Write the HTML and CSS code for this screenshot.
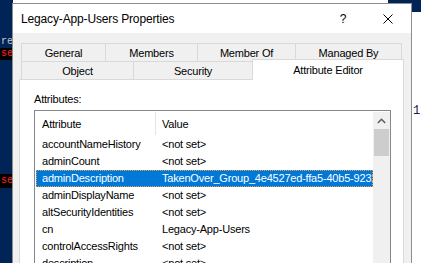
FILE: index.html
```html
<!DOCTYPE html>
<html>
<head>
<meta charset="utf-8">
<link rel="stylesheet" href="styles.css">
</head>
<body>
<div class="console">
  <div class="con-line con-gray">red</div>
  <div class="con-line con-err">se</div>
  <div class="con-line con-err con-low">se</div>
</div>
<div class="topnav"></div>
<div class="gutter">1</div>

<div class="dialog">
  <div class="titlebar">
    <div class="title">Legacy-App-Users Properties</div>
    <div class="tbtn help">?</div>
    <div class="tbtn close">
      <svg width="10" height="10" viewBox="0 0 10 10"><path d="M0.5 0.5 L9.5 9.5 M9.5 0.5 L0.5 9.5" stroke="#000" stroke-width="1" fill="none"/></svg>
    </div>
  </div>
  <div class="content">
    <div class="tabs">
      <div class="tabrow">
        <div class="tab w-general">General</div>
        <div class="tab w-members">Members</div>
        <div class="tab w-memberof">Member Of</div>
        <div class="tab w-managed">Managed By</div>
      </div>
      <div class="tabrow">
        <div class="tab w-object">Object</div>
        <div class="tab w-security">Security</div>
        <div class="tab tab-sel w-attr">Attribute Editor</div>
      </div>
    </div>
    <div class="panel">
      <div class="label">Attributes:</div>
      <div class="list">
        <div class="list-main">
          <div class="header">
            <div class="h1">Attribute</div>
            <div class="hdiv"></div>
            <div class="h2">Value</div>
          </div>
          <div class="row"><div class="c1">accountNameHistory</div><div class="c2">&lt;not set&gt;</div></div>
          <div class="row"><div class="c1">adminCount</div><div class="c2">&lt;not set&gt;</div></div>
          <div class="row row-sel"><div class="c1">adminDescription</div><div class="c2">TakenOver_Group_4e4527ed-ffa5-40b5-9231-7c2a</div></div>
          <div class="row"><div class="c1">adminDisplayName</div><div class="c2">&lt;not set&gt;</div></div>
          <div class="row"><div class="c1">altSecurityIdentities</div><div class="c2">&lt;not set&gt;</div></div>
          <div class="row"><div class="c1">cn</div><div class="c2">Legacy-App-Users</div></div>
          <div class="row"><div class="c1">controlAccessRights</div><div class="c2">&lt;not set&gt;</div></div>
          <div class="row"><div class="c1">description</div><div class="c2">&lt;not set&gt;</div></div>
        </div>
        <div class="scrollbar">
          <div class="sb-btn">
            <svg width="9" height="6" viewBox="0 0 9 6"><path d="M0.8 5 L4.5 1.3 L8.2 5" stroke="#606060" stroke-width="1.6" fill="none"/></svg>
          </div>
          <div class="sb-thumb"></div>
        </div>
      </div>
    </div>
  </div>
</div>
</body>
</html>
```

FILE: styles.css
```css
html, body {
  margin: 0;
  padding: 0;
}
body {
  width: 421px;
  height: 263px;
  overflow: hidden;
  position: relative;
  background: #ffffff;
  font-family: "Liberation Sans", Arial, sans-serif;
  color: #000;
}

/* background windows */
.console {
  position: absolute;
  left: 0;
  top: 0;
  width: 13px;
  height: 263px;
  background: #012456;
  overflow: hidden;
  font-family: "Liberation Mono", monospace;
  font-size: 10px;
  padding-top: 36px;
  box-sizing: border-box;
}
.con-line {
  height: 12px;
  line-height: 12px;
  white-space: nowrap;
  padding-left: 1px;
}
.con-gray {
  color: #c8c8c8;
}
.con-err {
  background: #000;
  color: #ff2020;
  height: 12px;
}
.con-low {
  margin-top: 114px;
  height: 14px;
  line-height: 14px;
}
.topnav {
  position: absolute;
  right: 0;
  top: 0;
  width: 33px;
  height: 12px;
  background: #012456;
}
.gutter {
  position: absolute;
  left: 413px;
  top: 104px;
  font-family: "Liberation Mono", monospace;
  font-size: 12px;
  color: #14203a;
}

/* dialog */
.dialog {
  position: absolute;
  left: 12px;
  top: 3px;
  width: 400px;
  height: 290px;
  box-sizing: border-box;
  border: 1px solid #8e8e8e;
  background: #f0f0f0;
}
.titlebar {
  height: 29px;
  background: #fff;
  display: flex;
  align-items: center;
}
.title {
  flex: 1;
  padding-left: 8px;
  font-size: 12px;
  letter-spacing: -0.15px;
}
.tbtn {
  width: 46px;
  height: 29px;
  display: flex;
  align-items: center;
  justify-content: center;
}
.help {
  font-size: 12px;
  padding-left: 2px;
  box-sizing: border-box;
}

.content {
  padding: 10px 7px 0 6px;
}
.tabs {
  margin: 0 2px;
}
.tabrow {
  display: flex;
  height: 18px;
  align-items: flex-end;
}
.tab {
  box-sizing: border-box;
  height: 18px;
  flex-shrink: 0;
  border: 1px solid #d9d9d9;
  border-bottom: none;
  background: #f0f0f0;
  font-size: 11px;
  letter-spacing: -0.2px;
  display: flex;
  align-items: center;
  justify-content: center;
  margin-left: -1px;
}
.tab:first-child {
  margin-left: 0;
}
.w-general { width: 85px; }
.w-members { width: 93px; }
.w-memberof { width: 99px; }
.w-managed { width: 107px; }
.w-object { width: 113px; }
.w-security { width: 120px; }
.w-attr { width: 152px; }
.tab-sel {
  height: 21px;
  margin-bottom: -1px;
  background: #fff;
  position: relative;
  z-index: 1;
  padding-bottom: 1px;
}

.panel {
  box-sizing: border-box;
  height: 200px;
  background: #fff;
  border: 1px solid #d9d9d9;
  padding: 13px 0 0 14px;
}
.label {
  font-size: 11px;
  line-height: 13px;
  height: 13px;
  margin-bottom: 4px;
  letter-spacing: -0.2px;
}
.list {
  width: 357px;
  height: 170px;
  box-sizing: border-box;
  border: 1px solid #828790;
  background: #fff;
  display: flex;
}
.list-main {
  flex: 1;
  min-width: 0;
  padding-left: 1px;
  overflow: hidden;
  font-size: 11px;
  letter-spacing: -0.2px;
}
.header {
  height: 25px;
  display: flex;
  align-items: center;
}
.h1 {
  width: 119px;
  padding-left: 6px;
  box-sizing: border-box;
}
.hdiv {
  width: 1px;
  height: 23px;
  background: #e5e5e5;
}
.h2 {
  padding-left: 6px;
}
.row {
  display: flex;
  height: 17px;
  line-height: 17px;
  white-space: nowrap;
}
.c1 {
  width: 120px;
  flex-shrink: 0;
  padding-left: 6px;
  box-sizing: border-box;
  overflow: hidden;
}
.c2 {
  flex: 1;
  padding-left: 6px;
  overflow: hidden;
}
.row-sel {
  background: #0078d7;
  color: #fff;
  outline: 1px dotted #f5a040;
  outline-offset: -1px;
}
.scrollbar {
  width: 17px;
  flex-shrink: 0;
  margin-top: 1px;
  background: #f0f0f0;
  display: flex;
  flex-direction: column;
}
.sb-btn {
  height: 17px;
  display: flex;
  align-items: center;
  justify-content: center;
}
.sb-thumb {
  height: 27px;
  margin: 0 1px;
  background: #cdcdcd;
}
```
